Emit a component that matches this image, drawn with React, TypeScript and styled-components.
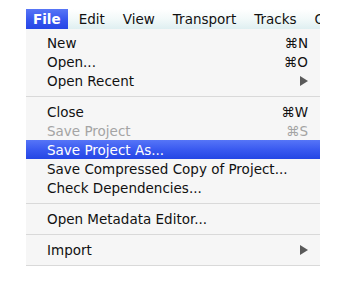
import styled, { createGlobalStyle } from 'styled-components';

interface MenuEntry {
  label?: string;
  shortcut?: string;
  submenu?: boolean;
  disabled?: boolean;
  active?: boolean;
  separator?: boolean;
}

const entries: MenuEntry[] = [
  { label: 'New', shortcut: '⌘N' },
  { label: 'Open...', shortcut: '⌘O' },
  { label: 'Open Recent', submenu: true },
  { separator: true },
  { label: 'Close', shortcut: '⌘W' },
  { label: 'Save Project', shortcut: '⌘S', disabled: true },
  { label: 'Save Project As...', active: true },
  { label: 'Save Compressed Copy of Project...' },
  { label: 'Check Dependencies...' },
  { separator: true },
  { label: 'Open Metadata Editor...' },
  { separator: true },
  { label: 'Import', submenu: true },
];

const menus = ['File', 'Edit', 'View', 'Transport', 'Tracks', 'Generate'];

function App() {
  return (
    <>
      <GlobalStyle />
      <Page>
        <MenuBar>
          {menus.map((m, i) => (
            <BarItem key={m} open={i === 0}>
              {m}
            </BarItem>
          ))}
        </MenuBar>
        <Dropdown>
          {entries.map((e, i) =>
            e.separator ? (
              <Separator key={i} />
            ) : (
              <Row key={i} active={e.active} disabled={e.disabled}>
                <span>{e.label}</span>
                {e.shortcut && <Shortcut>{e.shortcut}</Shortcut>}
                {e.submenu && <Arrow />}
              </Row>
            ),
          )}
        </Dropdown>
      </Page>
    </>
  );
}

export default App;

const GlobalStyle = createGlobalStyle`
  html, body {
    margin: 0;
    padding: 0;
    background: #ffffff;
  }
  body {
    font-family: "DejaVu Sans", "Liberation Sans", sans-serif;
  }
`;

const Page = styled.div`
  width: 360px;
  height: 288px;
  padding: 9px 0 0 26px;
  box-sizing: border-box;
  overflow: hidden;
`;

const MenuBar = styled.div`
  display: flex;
  width: 294px;
  height: 20px;
  overflow: hidden;
  background: linear-gradient(to bottom, #ffffff 0%, #f2f9f9 50%, #dfeff1 100%);
  font-size: 13.5px;
  line-height: 20px;
  color: #111;
`;

const BarItem = styled.div<{ open?: boolean }>`
  flex: none;
  padding: 0 7px;
  margin-right: 4px;
  white-space: nowrap;
  color: ${(p) => (p.open ? '#ffffff' : '#111')};
  font-weight: ${(p) => (p.open ? 'bold' : 'normal')};
  background: ${(p) =>
    p.open ? 'linear-gradient(to bottom, #5876f6 0%, #3656ee 55%, #2646e6 100%)' : 'transparent'};
`;

const Dropdown = styled.div`
  width: 294px;
  padding: 4px 0 6px;
  background: #f6f6f6;
  border-bottom: 1px solid #d9d9d9;
  font-size: 13.5px;
`;

const Row = styled.div<{ active?: boolean; disabled?: boolean }>`
  display: flex;
  align-items: center;
  justify-content: space-between;
  height: 19px;
  padding: 0 12px 0 21px;
  white-space: nowrap;
  color: ${(p) => (p.active ? '#ffffff' : p.disabled ? '#a4a4a4' : '#111')};
  background: ${(p) =>
    p.active ? 'linear-gradient(to bottom, #5675f7 0%, #3a5af0 50%, #2446e4 100%)' : 'transparent'};
`;

const Shortcut = styled.span`
  margin-left: 20px;
`;

const Arrow = styled.span`
  width: 0;
  height: 0;
  margin-right: 0;
  border-top: 5px solid transparent;
  border-bottom: 5px solid transparent;
  border-left: 8px solid #5a5a5a;
`;

const Separator = styled.div`
  height: 12px;
  display: flex;
  align-items: center;
  &::after {
    content: '';
    flex: 1;
    height: 1px;
    background: #d9d9d9;
  }
`;
